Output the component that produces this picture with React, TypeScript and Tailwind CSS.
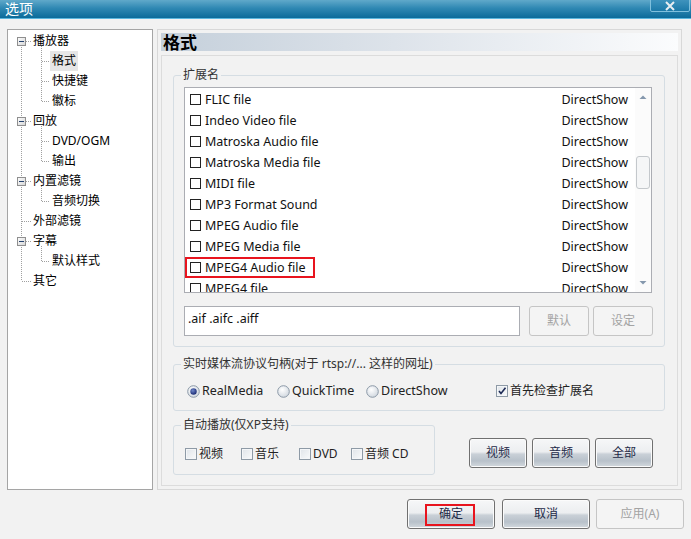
import React from "react";

const F = "font-['Noto_Sans','Noto_Sans_CJK_SC',sans-serif]";

const BTN =
  "flex items-center justify-center h-[30px] rounded-[3px] border border-[#707070] text-[12px] text-[#1e2a48] shadow-[inset_0_0_0_1px_#fbfbfb] bg-[linear-gradient(180deg,#f6f7f8_0%,#eceef0_46%,#c9d0d7_54%,#b8c1ca_78%,#d3d9de_100%)]";
const BTN_DIS =
  "flex items-center justify-center h-[30px] rounded-[3px] border border-[#c5c5c5] text-[12px] text-[#a3a3a3] bg-[#f4f4f4]";

function Tree() {
  const rows: [string, number][] = [
    ["播放器", 0],
    ["格式", 1],
    ["快捷键", 1],
    ["徽标", 1],
    ["回放", 0],
    ["DVD/OGM", 1],
    ["输出", 1],
    ["内置滤镜", 0],
    ["音频切换", 1],
    ["外部滤镜", 0],
    ["字幕", 0],
    ["默认样式", 1],
    ["其它", 0],
  ];
  const cy = (i: number) => 11 + 20 * i;
  const boxes = [0, 4, 7, 10];
  const groups: [number, number][] = [
    [0, 3],
    [4, 6],
    [7, 8],
    [10, 11],
  ];
  return (
    <div className="relative w-[146px] h-[461px] border border-[#a5a5a5] bg-white">
      <svg className="absolute left-0 top-0" width="144" height="459">
        <g stroke="#a0a0a0" strokeWidth="1" strokeDasharray="1 1" shapeRendering="crispEdges">
          <line x1="13.5" y1="11" x2="13.5" y2="251" />
          {[9, 12].map((i) => (
            <line key={i} x1="14" y1={cy(i) + 0.5} x2="23" y2={cy(i) + 0.5} />
          ))}
          {boxes.map((i) => (
            <line key={i} x1="18" y1={cy(i) + 0.5} x2="23" y2={cy(i) + 0.5} />
          ))}
          {groups.map(([a, b]) => (
            <g key={a}>
              <line x1="33.5" y1={cy(a) + 5} x2="33.5" y2={cy(b) + 1} />
              {Array.from({ length: b - a }, (_, k) => a + 1 + k).map((i) => (
                <line key={i} x1="34" y1={cy(i) + 0.5} x2="42" y2={cy(i) + 0.5} />
              ))}
            </g>
          ))}
        </g>
        <defs>
          <linearGradient id="bx" x1="0" y1="0" x2="1" y2="1">
            <stop offset="0" stopColor="#ffffff" />
            <stop offset="1" stopColor="#d4d4d4" />
          </linearGradient>
        </defs>
        {boxes.map((i) => (
          <g key={i}>
            <rect x="9.5" y={cy(i) - 3.5} width="8" height="8" fill="url(#bx)" stroke="#8f8f8f" />
            <line x1="11" y1={cy(i) + 0.5} x2="16" y2={cy(i) + 0.5} stroke="#24426e" shapeRendering="crispEdges" />
          </g>
        ))}
      </svg>
      <div className="relative pt-[1px]">
        {rows.map(([t, lvl], i) => (
          <div key={i} className={`h-[20px] flex items-center ${lvl ? "pl-[42px]" : "pl-[23px]"}`}>
            <span
              className={`px-[2px] h-[20px] leading-[20px] text-[12px] text-black ${
                i === 1 ? "bg-[#e6e6e6]" : ""
              }`}
            >
              {t}
            </span>
          </div>
        ))}
      </div>
    </div>
  );
}

function ListBox() {
  const items = [
    "FLIC file",
    "Indeo Video file",
    "Matroska Audio file",
    "Matroska Media file",
    "MIDI file",
    "MP3 Format Sound",
    "MPEG Audio file",
    "MPEG Media file",
    "MPEG4 Audio file",
    "MPEG4 file",
  ];
  return (
    <div className="w-[468px] h-[206px] border border-[#abadb3] bg-white flex">
      <div className="flex-1 pt-[1px] overflow-hidden">
        {items.map((t, i) => (
          <div key={t} className="relative h-[21px] flex items-center text-[12.5px] text-[#111]">
            <span className="ml-[5px] w-[11px] h-[11px] border border-[#222] bg-white" />
            <span className="ml-[4px] flex-1 pt-[1px]">{t}</span>
            <span className="mr-[7px] pt-[1px]">DirectShow</span>
            {i === 8 && (
              <span className="absolute left-0 top-0 w-[130px] h-[21px] border-2 border-[#e8141e]" />
            )}
          </div>
        ))}
      </div>
      <div className="w-[16px] bg-[#fbfbfb] flex flex-col items-center">
        <svg width="16" height="17" className="shrink-0">
          <path d="M4.5 11 L8 7.5 L11.5 11 Z" fill="#8598ad" />
        </svg>
        <div className="mt-[51px] w-[14px] h-[33px] rounded-[3px] border border-[#c4c8cc] bg-[#f5f6f7]" />
        <div className="flex-1" />
        <svg width="16" height="17" className="shrink-0">
          <path d="M4.5 6 L8 9.5 L11.5 6 Z" fill="#8598ad" />
        </svg>
      </div>
    </div>
  );
}

function Radio({ checked, label, w }: { checked?: boolean; label: string; w: string }) {
  return (
    <div className={`flex items-center ${w}`}>
      <svg width="13" height="13" className="shrink-0">
        <defs>
          <radialGradient id="rg" cx="0.4" cy="0.35" r="0.7">
            <stop offset="0" stopColor="#ffffff" />
            <stop offset="1" stopColor="#cfd6de" />
          </radialGradient>
          <radialGradient id="rd" cx="0.4" cy="0.35" r="0.7">
            <stop offset="0" stopColor="#6f86c9" />
            <stop offset="1" stopColor="#15256e" />
          </radialGradient>
        </defs>
        <circle cx="6.5" cy="6.5" r="5.8" fill="url(#rg)" stroke="#8c99a7" />
        {checked && <circle cx="6.5" cy="6.5" r="3.2" fill="url(#rd)" />}
      </svg>
      <span className="ml-[2px] text-[12.5px] text-[#222] leading-none">{label}</span>
    </div>
  );
}

function VCheck({ checked, label, w }: { checked?: boolean; label: string; w?: string }) {
  return (
    <div className={`flex items-center ${w ?? ""}`}>
      <span className="relative shrink-0 w-[12px] h-[12px] border border-[#8e9aa6] bg-[linear-gradient(135deg,#dfe4e9,#f9fafb)] shadow-[inset_0_0_0_1px_#f4f6f8]">
        {checked && (
          <svg width="10" height="10" className="absolute left-0 top-0">
            <path d="M2 5 L4 7.5 L8.5 1.8" stroke="#1d2a55" strokeWidth="1.6" fill="none" />
          </svg>
        )}
      </span>
      <span className="ml-[2px] text-[12px] text-[#222] leading-none">{label}</span>
    </div>
  );
}

function Group({
  label,
  className,
  children,
}: {
  label: string;
  className: string;
  children: React.ReactNode;
}) {
  return (
    <div className={`relative border border-[#d5dde3] rounded-[3px] ${className}`}>
      <span className="absolute left-[7px] -top-[11px] px-[2px] bg-[#f2f2f2] text-[12px] text-[#333] leading-[20px]">
        {label}
      </span>
      {children}
    </div>
  );
}

export default function App() {
  return (
    <div className={`${F} w-[691px] h-[539px] bg-[#f2f2f2] overflow-hidden`}>
      {/* title bar */}
      <div className="h-[19px] flex items-start border-b border-[#5cb7de] bg-[linear-gradient(180deg,#60a9ca_0%,#2f88b3_45%,#0b6b9a_100%)]">
        <span className="ml-[5px] text-[14px] leading-[18px] text-white">选项</span>
        <div className="flex-1" />
        <div className="mr-[1px] -mt-[1px] w-[40px] h-[13px] border border-[#7fc0dd] rounded-b-[2px] bg-[linear-gradient(180deg,#3f93bd,#1b79a8)] flex items-center justify-center">
          <svg width="12" height="10">
            <path d="M2 1 L10 9 M10 1 L2 9" stroke="#e8eef2" strokeWidth="2" />
          </svg>
        </div>
      </div>

      <div className="flex mt-[10px] ml-[7px] items-start">
        <Tree />
        <div className="ml-[4px] w-[525px] h-[461px] border border-[#d8d8d8] p-[3px] flex flex-col">
          <div className="h-[18px] shrink-0 bg-[linear-gradient(90deg,#c5d0db_0%,#dde3ea_45%,#fbfcfd_100%)] flex items-center">
            <span className="ml-[2px] text-[17px] font-bold text-black leading-none">格式</span>
          </div>
          <div className="mt-[4px] flex-1 border border-[#dcdcdc] flex flex-col">
            <Group label="扩展名" className="ml-[11px] mt-[19px] w-[492px] h-[272px]">
              <div className="mt-[11px] ml-[10px]">
                <ListBox />
                <div className="mt-[13px] flex">
                  <div className="w-[336px] h-[30px] border border-[#abadb3] bg-white pl-[3px] pt-[3px] text-[12.5px] text-[#111] leading-[18px]">
                    .aif .aifc .aiff
                  </div>
                  <div className={`${BTN_DIS} ml-[9px] w-[60px]`}>默认</div>
                  <div className={`${BTN_DIS} ml-[4px] w-[60px]`}>设定</div>
                </div>
              </div>
            </Group>
            <Group
              label="实时媒体流协议句柄(对于 rtsp://... 这样的网址)"
              className="ml-[11px] mt-[17px] w-[492px] h-[47px]"
            >
              <div className="mt-[19px] h-[14px] pl-[13px] flex items-center">
                <Radio checked label="RealMedia" w="w-[90px]" />
                <Radio label="QuickTime" w="w-[89px]" />
                <Radio label="DirectShow" w="w-[130px]" />
                <VCheck checked label="首先检查扩展名" />
              </div>
            </Group>
            <div className="flex mt-[14px] ml-[11px] items-start">
              <Group label="自动播放(仅XP支持)" className="w-[262px] h-[50px]">
                <div className="mt-[22px] h-[12px] pl-[11px] flex items-center">
                  <VCheck label="视频" w="w-[56px]" />
                  <VCheck label="音乐" w="w-[58px]" />
                  <VCheck label="DVD" w="w-[52px]" />
                  <VCheck label="音频 CD" />
                </div>
              </Group>
              <div className="ml-[34px] mt-[13px] flex gap-[5px]">
                <div className={`${BTN} w-[58px]`}>视频</div>
                <div className={`${BTN} w-[58px]`}>音频</div>
                <div className={`${BTN} w-[58px]`}>全部</div>
              </div>
            </div>
          </div>
        </div>
      </div>

      <div className="flex mt-[9px] ml-[407px]">
        <div className={`${BTN} relative w-[88px]`}>
          确定
          <span className="absolute left-[17px] top-[4px] w-[50px] h-[22px] border-2 border-[#e8141e]" />
        </div>
        <div className={`${BTN} ml-[7px] w-[88px]`}>取消</div>
        <div className={`${BTN_DIS} ml-[6px] w-[88px]`}>应用(A)</div>
      </div>
    </div>
  );
}
